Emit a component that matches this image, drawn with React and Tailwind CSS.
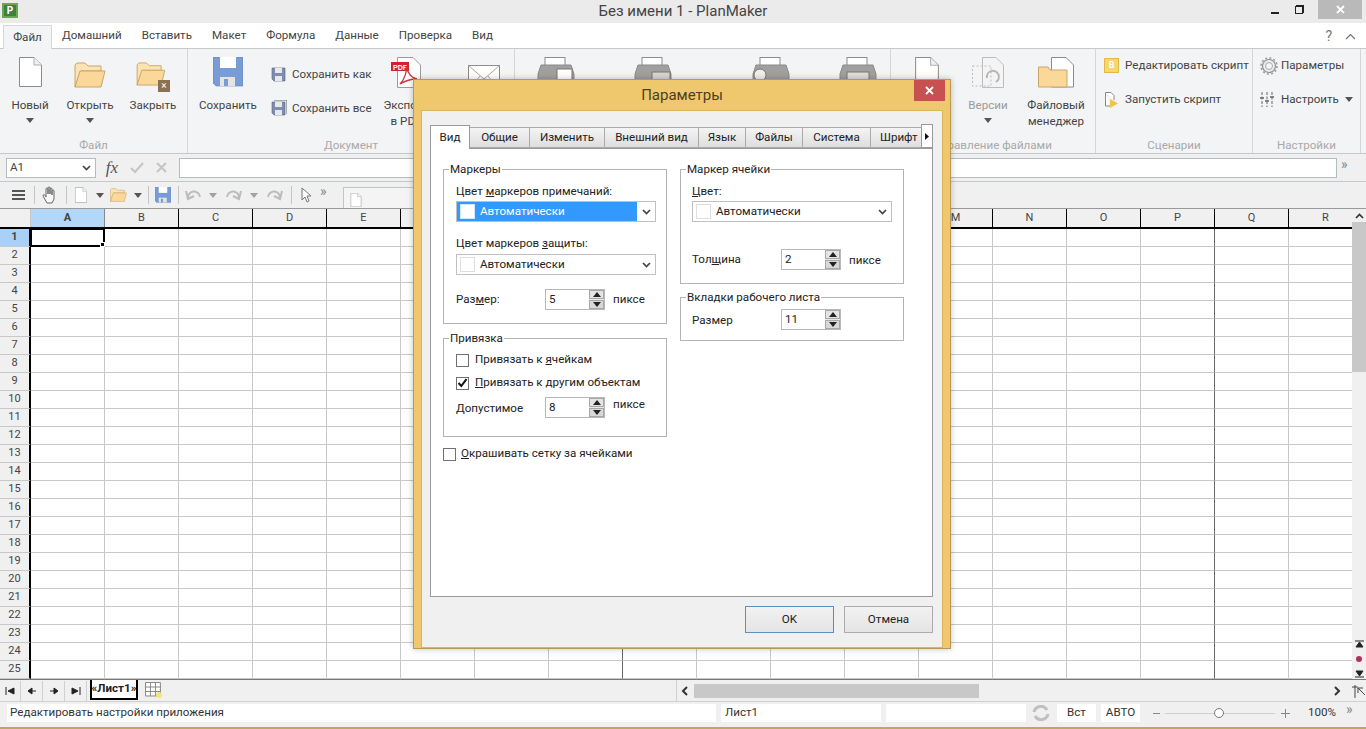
import React from 'react';

const columns = ['A','B','C','D','E','F','G','H','I','J','K','L','M','N','O','P','Q','R'];
const rows = Array.from({length:25},(_,i)=>i+1);

const Caret = ({className=''}) => (
  <svg width="8" height="5" viewBox="0 0 8 5" className={className}><path d="M0 0H8L4 5Z" fill="#555"/></svg>
);

const DocIcon = ({w=23,h=30}) => (
  <svg width={w} height={h} viewBox="0 0 23 30">
    <path d="M.5.5H15L22.5 8V29.5H.5Z" fill="#fff" stroke="#8c8c8c"/>
    <path d="M15 .5V8H22.5" fill="#f0f0f0" stroke="#b0b0b0"/>
  </svg>
);

const FolderIcon = ({w=32,h=26}) => (
  <svg width={w} height={h} viewBox="0 0 32 26">
    <path d="M1 25V3L3 1H11L14 4H27V9H7Z" fill="#fce3b4" stroke="#c9a566"/>
    <path d="M1 25L6 9H31L27 25Z" fill="#fbd89a" stroke="#c9a566"/>
  </svg>
);

const SaveIcon = ({size=30}) => (
  <svg width={size} height={size} viewBox="0 0 30 30">
    <path d="M0 0H30V29H3L0 26Z" fill="#7a9cd6" stroke="#5f7fb8" strokeWidth=".6"/>
    <rect x="7" y="0" width="16" height="11" fill="#fff"/>
    <rect x="7" y="20" width="15" height="9" fill="#e4e4e4"/>
    <rect x="11" y="22" width="4" height="7" fill="#7a9cd6"/>
  </svg>
);

const SmallSave = ({all}) => (
  <svg width="16" height="17" viewBox="0 0 16 17">
    {all && <path d="M3 0H16V14" fill="none" stroke="#666"/>}
    <path d="M1 2H14V15H3L1 13Z" fill="#7d8eae" stroke="#59657d" strokeWidth=".6"/>
    <rect x="4" y="2" width="7" height="5" fill="#e8e8e8"/>
    <rect x="4" y="10" width="7" height="5" fill="#e8e8e8"/>
  </svg>
);

const PrinterIcon = ({kind}) => (
  <svg width="38" height="34" viewBox="0 0 38 34">
    <rect x="8" y=".5" width="20" height="10" fill="#fff" stroke="#8c8c8c"/>
    <path d="M1 17L4 8H34L37 17V30H1Z" fill="#a0a0a0" stroke="#8a8a8a"/>
    {kind===0 && <rect x="20" y="12" width="15" height="12" fill="#fff" stroke="#777"/>}
    {kind===1 && <rect x="18" y="15" width="18" height="12" fill="#d5d5d5" stroke="#777"/>}
    {kind===2 && <circle cx="8" cy="18" r="6" fill="#eee" stroke="#777"/>}
    {kind===3 && <rect x="8" y="15" width="22" height="10" fill="#ddd" stroke="#777"/>}
  </svg>
);

const MailIcon = () => (
  <svg width="32" height="26" viewBox="0 0 32 26">
    <rect x=".5" y=".5" width="31" height="25" fill="#fff" stroke="#8c8c8c"/>
    <path d="M.5.5L16 14L31.5.5M.5 25.5L12 11M31.5 25.5L20 11" fill="none" stroke="#a8a8a8"/>
  </svg>
);

const PdfIcon = () => (
  <svg width="30" height="31" viewBox="0 0 30 31">
    <path d="M6.5.5H22L29.5 8V30.5H6.5Z" fill="#fff" stroke="#9c9c9c"/>
    <rect x="0" y="5" width="18" height="9" fill="#d2232a"/>
    <text x="2" y="12.5" fontSize="7" fontWeight="700" fill="#fff" fontFamily="Liberation Sans">PDF</text>
    <path d="M9 27C14 22 16 14 15 10C17 16 20 21 26 22C20 22 14 24 9 27Z" fill="none" stroke="#c9373d" strokeWidth="1.3"/>
  </svg>
);

const VersionsIcon = () => (
  <svg width="32" height="31" viewBox="0 0 32 31">
    <path d="M10.5.5H24L31.5 8V30.5H10.5Z" fill="#f4f4f4" stroke="#bdbdbd"/>
    <path d="M.5 9H19V29H.5Z" fill="none" stroke="#bdbdbd" strokeDasharray="2 2"/>
    <path d="M15 21A6 6 0 1 1 24 25" fill="none" stroke="#b4b4b4" strokeWidth="2"/>
  </svg>
);

const FileManagerIcon = () => (
  <svg width="36" height="31" viewBox="0 0 36 31">
    <path d="M13.5.5H28L35.5 8V30H13.5Z" fill="#fff" stroke="#8c8c8c"/>
    <path d="M.5 30V10H10L12 13H29V30Z" fill="#fbd89a" stroke="#c9a566"/>
  </svg>
);

const GearIcon = () => (
  <svg width="18" height="18" viewBox="0 0 18 18">
    <circle cx="9" cy="9" r="6.5" fill="#eee" stroke="#8f8f8f" strokeWidth="1.2"/>
    <circle cx="9" cy="9" r="8" fill="none" stroke="#9c9c9c" strokeWidth="1.6" strokeDasharray="2 2.2"/>
    <circle cx="9" cy="9" r="3.5" fill="#f5f5f5" stroke="#a8a8a8"/>
  </svg>
);

const SlidersIcon = () => (
  <svg width="14" height="15" viewBox="0 0 14 15" stroke="#666">
    <path d="M2 0V15M7 0V15M12 0V15" strokeDasharray="3 1.5"/>
    <path d="M0 6H4M5 9H9M10 5H14" strokeWidth="1.5"/>
  </svg>
);

const SpinBox = ({value}) => (
  <div className="flex h-[21px] w-[60px] items-center justify-between border border-[#b8b8b8] bg-white pl-[3px]">
    <span>{value}</span>
    <div className="flex h-full w-[15px] flex-col justify-between bg-[#e8e8e8]">
      <div className="flex h-[9px] items-center justify-center border border-[#a8a8a8] bg-[#e4e4e4]">
        <svg width="8" height="5"><path d="M0 5L4 0L8 5Z" fill="#222"/></svg>
      </div>
      <div className="flex h-[9px] items-center justify-center border border-[#a8a8a8] bg-[#d8d8d8]">
        <svg width="8" height="5"><path d="M0 0L8 0L4 5Z" fill="#222"/></svg>
      </div>
    </div>
  </div>
);

const ComboArrow = () => (
  <svg width="9" height="6" viewBox="0 0 9 6"><path d="M1 1L4.5 4.5L8 1" fill="none" stroke="#444" strokeWidth="1.7"/></svg>
);

const Combo = ({active}) => (
  <div className="flex h-[21px] w-[200px] items-center border border-[#c0c0c0] bg-white">
    <div className={`flex h-full flex-1 items-center pl-[3px] ${active ? 'bg-[#3399ff] text-white' : ''}`}>
      <span className={`mr-[5px] h-[15px] w-[15px] border ${active ? 'border-[#cfe6ff] bg-white' : 'border-[#dedede] bg-white'}`}></span>
      Автоматически
    </div>
    <div className="flex w-[18px] justify-center"><ComboArrow/></div>
  </div>
);

const GroupBox = ({title,className='',children}) => (
  <div className={`relative w-[224px] border border-[#b4b4b4] ${className}`}>
    <span className="absolute -top-[9px] left-[5px] bg-white px-[1px] leading-[16px]">{title}</span>
    {children}
  </div>
);

const Check = ({checked}) => (
  <span className="flex h-[13px] w-[13px] shrink-0 items-center justify-center border border-[#707070] bg-white">
    {checked && <svg width="11" height="10" viewBox="0 0 11 10"><path d="M1.5 5L4.3 8L9.5 1.2" fill="none" stroke="#111" strokeWidth="2"/></svg>}
  </span>
);

const RibbonGroup = ({width,label,children,className=''}) => (
  <div className={`flex h-full shrink-0 flex-col border-r border-[#d5d5d5] ${width}`}>
    <div className={`flex flex-1 pt-[8px] ${className}`}>{children}</div>
    <div className="h-[16px] text-center leading-[16px] text-[#a9a9a9]">{label}</div>
  </div>
);

const LargeButton = ({width,icon,lines=[],caret,muted,className=''}) => (
  <div className={`flex shrink-0 flex-col items-center ${width} ${className} ${muted ? 'text-[#9a9a9a]' : ''}`}>
    <div className="flex h-[35px] items-start">{icon}</div>
    <div className="mt-[5px] text-center leading-[16px]">
      {lines.map(l => <div key={l}>{l}</div>)}
    </div>
    {caret && <Caret className="mt-[5px]"/>}
  </div>
);

const SmallButton = ({icon,text,caret,className=''}) => (
  <div className={`flex h-[17px] items-center whitespace-nowrap ${className}`}>
    <span className="flex w-[21px] shrink-0 justify-start">{icon}</span>
    {text}
    {caret && <Caret className="ml-[6px]"/>}
  </div>
);

const Sep = ({className=''}) => <span className={`h-[18px] w-px bg-[#c4c4c4] ${className}`}></span>;

const Ribbon = () => (
  <div className="flex h-[105px] border-b border-[#c5c9cc] bg-[#f3f4f5] text-[11.6px]">
    <RibbonGroup width="w-[188px]" label="Файл">
      <LargeButton width="w-[60px]" icon={<DocIcon/>} lines={['Новый']} caret/>
      <LargeButton width="w-[60px]" icon={<FolderIcon w={32} h={26}/>} lines={['Открыть']} caret className="[&>div:first-child]:items-center"/>
      <LargeButton width="w-[66px]" icon={
        <span className="relative block h-[26px] w-[34px]">
          <FolderIcon w={30} h={24}/>
          <span className="absolute bottom-[-4px] right-0 flex h-[12px] w-[12px] items-center justify-center bg-[#8d7050] text-[10px] leading-none text-white">×</span>
        </span>} lines={['Закрыть']} className="[&>div:first-child]:items-center"/>
    </RibbonGroup>
    <RibbonGroup width="w-[327px]" label="Документ">
      <LargeButton width="w-[78px]" className="ml-[1px]" icon={<SaveIcon/>} lines={['Сохранить']}/>
      <div className="ml-[4px] w-[107px] shrink-0 pt-[9px]">
        <SmallButton icon={<SmallSave/>} text="Сохранить как"/>
        <SmallButton icon={<SmallSave all/>} text="Сохранить все" className="mt-[17px]"/>
      </div>
      <LargeButton width="w-[56px]" icon={<PdfIcon/>} lines={['Экспорт','в PDF']}/>
      <LargeButton width="w-[80px]" className="ml-[10px]" icon={<div className="pt-[8px]"><MailIcon/></div>}/>
    </RibbonGroup>
    <RibbonGroup width="w-[376px]" label="">
      <LargeButton width="w-[80px]" className="ml-[1px]" icon={<PrinterIcon kind={0}/>}/>
      <LargeButton width="w-[80px]" className="ml-[17px]" icon={<PrinterIcon kind={1}/>}/>
      <LargeButton width="w-[80px]" className="ml-[38px]" icon={<PrinterIcon kind={2}/>}/>
      <LargeButton width="w-[80px]" className="ml-[7px]" icon={<PrinterIcon kind={3}/>}/>
    </RibbonGroup>
    <RibbonGroup width="w-[205px]" label="Управление файлами">
      <LargeButton width="w-[60px]" className="ml-[6px]" icon={<DocIcon w={26} h={31}/>}/>
      <LargeButton width="w-[60px]" className="ml-[1px]" icon={<VersionsIcon/>} lines={['Версии']} caret muted/>
      <LargeButton width="w-[72px]" className="ml-[2px]" icon={<FileManagerIcon/>} lines={['Файловый','менеджер']}/>
    </RibbonGroup>
    <RibbonGroup width="w-[157px]" label="Сценарии" className="flex-col pl-[8px]">
      <SmallButton icon={
        <span className="flex h-[15px] w-[15px] items-center justify-center border border-[#e0b94e] bg-[#f6d66d] text-[9px] font-bold leading-none text-white">B</span>
      } text="Редактировать скрипт"/>
      <SmallButton icon={
        <svg width="15" height="16" viewBox="0 0 15 16"><path d="M1.5.5H7L10 3.5V8M1.5.5V14H6" fill="#fff" stroke="#888"/><path d="M6 7L14 11.5L6 16Z" fill="#f2c14e"/></svg>
      } text="Запустить скрипт" className="mt-[17px]"/>
    </RibbonGroup>
    <RibbonGroup width="w-[108px]" label="Настройки" className="flex-col pl-[7px]">
      <SmallButton icon={<GearIcon/>} text="Параметры"/>
      <SmallButton icon={<SlidersIcon/>} text="Настроить" caret className="mt-[17px]"/>
    </RibbonGroup>
  </div>
);

const FormulaBar = () => (
  <div className="flex h-[28px] items-center border-b border-[#c5c9cc] bg-[#f0f0f0] pl-[6px] text-[11.6px]">
    <div className="flex h-[20px] w-[90px] items-center justify-between border border-[#b5bcc0] bg-white pl-[3px] pr-[4px]">
      A1 <ComboArrow/>
    </div>
    <span className="ml-[5px] w-[22px] text-center font-['Liberation_Serif',serif] text-[17px] italic leading-none text-[#555]">fx</span>
    <svg width="14" height="12" viewBox="0 0 14 12" className="ml-[7px]"><path d="M1 6L5 10L13 1" fill="none" stroke="#c4c4c4" strokeWidth="2"/></svg>
    <svg width="11" height="11" viewBox="0 0 11 11" className="ml-[12px]"><path d="M1 1L10 10M10 1L1 10" stroke="#c4c4c4" strokeWidth="2"/></svg>
    <div className="ml-[12px] h-[20px] w-[1158px] border border-[#b5bcc0] bg-white"></div>
    <span className="ml-[4px] -mt-[8px] text-[14px] leading-none text-[#888]">»</span>
  </div>
);

const Toolbar = () => (
  <div className="flex h-[27px] items-center border-b border-[#999] bg-[#f0f0f0] text-[11.6px]">
    <svg width="13" height="10" className="ml-[12px]"><path d="M0 1H13M0 5H13M0 9H13" stroke="#555" strokeWidth="2"/></svg>
    <Sep className="ml-[9px]"/>
    <svg width="15" height="18" viewBox="0 0 15 18" className="ml-[7px]"><path d="M4 9V3a1 1 0 0 1 2 0V8V2a1 1 0 0 1 2 0V8V3a1 1 0 0 1 2 0V9V5a1 1 0 0 1 2 0V13L10 17H5L1 10C1 8 3 8 4 11Z" fill="#f8f8f8" stroke="#666"/></svg>
    <Sep className="ml-[9px]"/>
    <span className="ml-[8px] flex"><DocIcon w={12} h={16}/></span>
    <Caret className="ml-[9px]"/>
    <span className="ml-[6px] flex"><FolderIcon w={17} h={14}/></span>
    <Caret className="ml-[7px]"/>
    <Sep className="ml-[6px]"/>
    <span className="ml-[6px] flex"><SaveIcon size={16}/></span>
    <Sep className="ml-[7px]"/>
    <svg width="16" height="12" viewBox="0 0 16 12" className="ml-[6px]"><path d="M3 9A6 6 0 0 1 15 8M1 2L3 10L9 7" fill="none" stroke="#bcbcbc" strokeWidth="2"/></svg>
    <Caret className="ml-[8px] opacity-50"/>
    <svg width="16" height="12" viewBox="0 0 16 12" className="ml-[9px]"><path d="M13 9A6 6 0 0 0 1 8M15 2L13 10L7 7" fill="none" stroke="#bcbcbc" strokeWidth="2"/></svg>
    <Caret className="ml-[8px] opacity-50"/>
    <svg width="16" height="12" viewBox="0 0 16 12" className="ml-[9px]"><path d="M13 9A6 6 0 0 0 1 8M15 2L13 10L7 7" fill="none" stroke="#bcbcbc" strokeWidth="2"/></svg>
    <Sep className="ml-[8px]"/>
    <svg width="12" height="16" viewBox="0 0 12 16" className="ml-[9px]"><path d="M1 1V13L4 10L6 15L8 14L6 9H10Z" fill="#fff" stroke="#777"/></svg>
    <span className="ml-[7px] -mt-[8px] text-[14px] leading-none text-[#888]">»</span>
    <div className="ml-[16px] flex h-[21px] w-[76px] items-end self-end border border-b-0 border-[#c4c4c4] bg-[#f4f4f4] pb-[1px] pl-[6px]">
      <DocIcon w={12} h={14}/>
    </div>
  </div>
);

const Sheet = () => (
  <div className="relative flex min-h-0 flex-1 overflow-hidden bg-white text-[11px]">
    <div className="min-w-0 flex-1 overflow-hidden">
      <div className="flex h-[20px] border-b-2 border-black bg-[#f0f0f0]">
        <div className="w-[31px] shrink-0 border-r border-[#c8c8c8]"></div>
        {columns.map(c => (
          <div key={c} className={`flex w-[74px] shrink-0 items-center justify-center border-r border-black ${c==='A' ? 'bg-[#b3d7f9] font-bold border-r-[#888]' : ''}`}>{c}</div>
        ))}
      </div>
      {rows.map(r => (
        <div key={r} className="flex h-[18px]">
          <div className={`flex w-[31px] shrink-0 items-center justify-center border-b border-[#c8c8c8] border-r-2 border-r-black ${r===1 ? 'bg-[#a9d1f7] font-bold' : 'bg-[#f0f0f0]'}`}>{r}</div>
          {columns.map(c => (
            <div key={c} className={`relative w-[74px] shrink-0 border-b border-r border-b-[#c8c8c8] ${c==='H'||c==='P' ? 'border-r-[#666]' : 'border-r-[#c8c8c8]'}`}>
              {r===1 && c==='A' && (
                <span className="absolute -left-[1px] -top-[1px] h-[19px] w-[75px] border-2 border-black">
                  <span className="absolute -bottom-[2px] -right-[2px] h-[5px] w-[5px] border border-white bg-black"></span>
                </span>
              )}
            </div>
          ))}
        </div>
      ))}
    </div>
    <div className="flex w-[14px] shrink-0 flex-col items-center bg-[#f0f0f0]">
      <svg width="9" height="6" viewBox="0 0 9 6" className="mt-[4px]"><path d="M1 5L4.5 1.5L8 5" fill="none" stroke="#333" strokeWidth="1.7"/></svg>
      <div className="mt-[3px] h-[150px] w-full bg-[#c8c8c8]"></div>
      <div className="flex-1"></div>
      <svg width="9" height="8" viewBox="0 0 9 8" className="mb-[8px]"><path d="M0 1H9M4.5 2L8 7H1Z" stroke="#222" fill="#222"/></svg>
      <span className="mb-[8px] h-[6px] w-[6px] rounded-full bg-[#b03060]"></span>
      <svg width="9" height="8" viewBox="0 0 9 8" className="mb-[1px]"><path d="M0 7H9M4.5 6L8 1H1Z" stroke="#222" fill="#222"/></svg>
    </div>
  </div>
);

const NavButton = ({d}) => (
  <div className="flex h-[20px] w-[22px] items-center justify-center border-r border-[#d0d0d0]">
    <svg width="10" height="8" viewBox="0 0 10 8"><path d={d} fill="#222" stroke="#222"/></svg>
  </div>
);

const SheetBar = () => (
  <div className="flex h-[22px] items-center border-t border-[#777] bg-[#f0f0f0] text-[11.6px]">
    <div className="-ml-[1px] flex">
      <NavButton d="M1 0V8M9 1L3 4L9 7Z"/>
      <NavButton d="M1 4L5 1V7ZM5 4H9"/>
      <NavButton d="M9 4L5 1V7ZM5 4H1"/>
      <NavButton d="M9 0V8M1 1L7 4L1 7Z"/>
    </div>
    <div className="ml-[3px] flex h-[20px] w-[48px] items-center justify-center self-start border-2 border-t-0 border-black bg-white font-bold text-[#222]">«Лист1»</div>
    <svg width="18" height="17" viewBox="0 0 18 17" className="ml-[7px]">
      <path d="M.5.5H15.5V14H.5ZM.5 5H15.5M.5 9.500H15.500M5.500.5V14M10.500.5V14" fill="#fff" stroke="#888"/>
      <circle cx="14" cy="13" r="3" fill="#f5e27a"/>
    </svg>
    <div className="ml-[513px] flex h-full w-[676px] items-center border-l border-[#d0d0d0] pl-[4px]">
      <svg width="7" height="10" viewBox="0 0 7 10"><path d="M6 1L2 5L6 9" fill="none" stroke="#333" strokeWidth="2"/></svg>
      <div className="ml-[6px] h-[14px] w-[285px] bg-[#c8c8c8]"></div>
      <svg width="7" height="10" viewBox="0 0 7 10" className="ml-auto mr-[8px]"><path d="M1 1L5 5L1 9" fill="none" stroke="#333" strokeWidth="2"/></svg>
    </div>
    <svg width="14" height="14" viewBox="0 0 14 14" className="ml-[3px]"><path d="M3 1V14M0 3H6M13 11L6 4M6 9V4H11" fill="none" stroke="#444"/></svg>
  </div>
);

const StatusBar = () => (
  <div className="flex h-[26px] items-center border-t border-[#d0d0d0] bg-[#f0f0f0] pb-[3px] text-[11.6px] text-[#333]">
    <div className="ml-[7px] flex h-[18px] w-[709px] items-center bg-white pl-[3px]">Редактировать настройки приложения</div>
    <div className="ml-[5px] flex h-[18px] w-[160px] items-center bg-white pl-[4px]">Лист1</div>
    <div className="ml-[5px] h-[18px] w-[140px] bg-white"></div>
    <svg width="18" height="16" viewBox="0 0 18 16" className="ml-[6px]"><path d="M2 7A7 7 0 0 1 15 5M16 9A7 7 0 0 1 3 11" fill="none" stroke="#c0c0c0" strokeWidth="3"/></svg>
    <div className="ml-[7px] flex h-[18px] w-[39px] items-center justify-center bg-white">Вст</div>
    <div className="ml-[5px] flex h-[18px] w-[39px] items-center justify-center bg-white">АВТО</div>
    <span className="ml-[13px] h-px w-[7px] bg-[#888]"></span>
    <div className="relative ml-[5px] flex h-px w-[110px] items-center bg-[#cfcfcf]">
      <span className="absolute left-[49px] h-[10px] w-[10px] rounded-full border border-[#777] bg-white"></span>
    </div>
    <svg width="9" height="9" className="ml-[6px]"><path d="M0 4.500H9M4.500 0V9" stroke="#888"/></svg>
    <span className="ml-[18px]">100%</span>
    <span className="ml-[10px] -mt-[8px] text-[14px] leading-none text-[#888]">»</span>
  </div>
);

const tabs = [
  ['Общие','w-[60px]'],
  ['Изменить','w-[75px]'],
  ['Внешний вид','w-[94px]'],
  ['Язык','w-[47px]'],
  ['Файлы','w-[57px]'],
  ['Система','w-[68px]'],
];

const Dialog = () => (
  <div className="absolute left-[413px] top-[79px] flex h-[570px] w-[538px] flex-col border border-[#b89a55] bg-[#efc76d] text-[11.6px] text-[#222] shadow-[0_0_6px_rgba(0,0,0,0.25)]">
    <div className="relative flex h-[30px] shrink-0 items-center justify-center text-[15px] text-[#4c3f20]">
      Параметры
      <div className="absolute right-[5px] top-0 flex h-[21px] w-[31px] items-center justify-center bg-[#c75050]">
        <svg width="9" height="9" viewBox="0 0 9 9"><path d="M1 1L8 8M8 1L1 8" stroke="#fff" strokeWidth="1.8"/></svg>
      </div>
    </div>
    <div className="mx-[7px] flex flex-1 flex-col border border-[#dcb45a] bg-[#f0f0f0] pl-[8px] pr-[9px] pt-[13px]">
      <div className="flex h-[24px] items-end">
        <div className="relative z-10 -mb-[1px] flex h-[24px] w-[40px] items-center justify-center border border-b-0 border-[#9a9a9a] bg-white">Вид</div>
        {tabs.map(([t,w]) => (
          <div key={t} className={`flex h-[21px] items-center justify-center border-b border-r border-t border-[#ababab] bg-gradient-to-b from-[#f4f4f4] to-[#dedede] ${w}`}>{t}</div>
        ))}
        <div className="flex h-[21px] w-[50px] items-center overflow-hidden border-b border-t border-[#ababab] bg-gradient-to-b from-[#f4f4f4] to-[#dedede] pl-[9px]">Шрифт</div>
        <div className="flex h-[24px] w-[12px] items-center justify-center border border-[#9a9a9a] bg-white">
          <svg width="4" height="7"><path d="M0 0L4 3.500L0 7Z" fill="#111"/></svg>
        </div>
      </div>
      <div className="flex h-[449px] gap-[13px] border border-[#9a9a9a] bg-white pl-[12px] pt-[20px]">
        <div>
          <GroupBox title="Маркеры" className="h-[155px] pl-[12px] pt-[13px]">
            <div className="leading-[16px]">Цвет <u>м</u>аркеров примечаний:</div>
            <div className="mt-[2px]"><Combo active/></div>
            <div className="mt-[13px] leading-[16px]">Цвет маркеров <u>з</u>ащиты:</div>
            <div className="mt-[3px]"><Combo/></div>
            <div className="mt-[14px] flex items-center">
              <span className="w-[89px]">Раз<u>м</u>ер:</span>
              <SpinBox value="5"/>
              <span className="ml-[8px]">пиксе</span>
            </div>
          </GroupBox>
          <GroupBox title="Привязка" className="mt-[14px] h-[99px] pl-[12px] pt-[13px]">
            <div className="flex h-[16px] items-center gap-[6px]"><Check/><span>Привязать к <u>я</u>чейкам</span></div>
            <div className="mt-[7px] flex h-[16px] items-center gap-[6px]"><Check checked/><span><u>П</u>ривязать к другим объектам</span></div>
            <div className="mt-[6px] flex items-center">
              <span className="w-[89px] pt-[3px]">Допустимое</span>
              <SpinBox value="8"/>
              <span className="ml-[8px] -mt-[6px]">пиксе</span>
            </div>
          </GroupBox>
          <div className="mt-[9px] flex h-[16px] items-center gap-[5px]"><Check/><span><u>О</u>крашивать сетку за ячейками</span></div>
        </div>
        <div>
          <GroupBox title="Маркер ячейки" className="h-[115px] pl-[11px] pt-[13px]">
            <div className="leading-[16px]"><u>Ц</u>вет:</div>
            <div className="mt-[2px]"><Combo/></div>
            <div className="mt-[27px] flex items-center">
              <span className="w-[89px]">Тол<u>щ</u>ина</span>
              <SpinBox value="2"/>
              <span className="ml-[8px] mt-[3px]">пиксе</span>
            </div>
          </GroupBox>
          <GroupBox title="Вкладки рабочего листа" className="mt-[13px] h-[44px] pl-[11px] pt-[11px]">
            <div className="flex items-center">
              <span className="w-[89px] pt-[2px]">Размер</span>
              <SpinBox value="11"/>
            </div>
          </GroupBox>
        </div>
      </div>
      <div className="flex justify-end gap-[10px] pt-[9px]">
        <div className="flex h-[27px] w-[89px] items-center justify-center border border-[#5b8fc0] bg-gradient-to-b from-[#f2f2f2] to-[#e4e4e4]">OK</div>
        <div className="flex h-[27px] w-[89px] items-center justify-center border border-[#acacac] bg-gradient-to-b from-[#f2f2f2] to-[#e4e4e4]">Отмена</div>
      </div>
    </div>
  </div>
);

export default function App() {
  return (
    <div className="relative flex h-[729px] w-[1366px] flex-col overflow-hidden bg-white font-['Roboto',sans-serif] text-[#444]">
      <div className="relative flex h-[23px] shrink-0 items-center justify-center bg-[#ebebeb] text-[15px] text-[#444]">
        <div className="absolute left-[2px] top-[3px] flex h-[15px] w-[16px] items-center justify-center border-2 border-[#6aa84f] bg-[#3f7f3f] text-[10px] font-bold leading-none text-white">P</div>
        Без имени 1 - PlanMaker
        <div className="absolute right-[4px] top-0 flex h-[19px] items-center">
          <span className="h-[2px] w-[8px] translate-y-[3px] bg-[#222]"></span>
          <span className="ml-[16px] h-[8px] w-[8px] border border-[#222] bg-[#ebebeb] shadow-[1px_-1px_0_#222]"></span>
          <span className="ml-[15px] flex h-[19px] w-[44px] items-center justify-center bg-[#b9b9b9]">
            <svg width="9" height="9" viewBox="0 0 9 9"><path d="M1 1L8 8M8 1L1 8" stroke="#fff" strokeWidth="1.8"/></svg>
          </span>
        </div>
      </div>
      <div className="flex h-[26px] shrink-0 items-end border-b border-[#c5c9cc] bg-white pl-[3px] text-[11.6px] text-[#444]">
        <div className="-mb-[1px] flex h-[24px] w-[49px] items-center justify-center border border-b-0 border-[#d5d8da] bg-[#f3f4f5]">Файл</div>
        <div className="flex h-[24px] items-center gap-[20px] pl-[10px]">
          {['Домашний','Вставить','Макет','Формула','Данные','Проверка','Вид'].map(t => <span key={t}>{t}</span>)}
        </div>
        <div className="ml-auto flex h-[24px] items-center gap-[13px] pr-[10px] text-[#777]">
          <span className="text-[14px]">?</span>
          <svg width="11" height="7" viewBox="0 0 11 7"><path d="M1 6L5.500 1.500L10 6" fill="none" stroke="#777" strokeWidth="1.2"/></svg>
        </div>
      </div>
      <Ribbon/>
      <FormulaBar/>
      <Toolbar/>
      <Sheet/>
      <SheetBar/>
      <StatusBar/>
      <div className="h-[2px] shrink-0 bg-[#c4a26a]"></div>
      <Dialog/>
    </div>
  );
}
